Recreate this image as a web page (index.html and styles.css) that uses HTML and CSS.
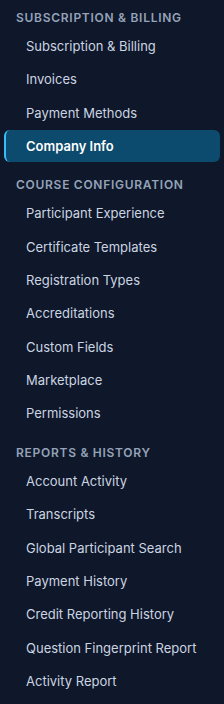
FILE: index.html
```html
<!DOCTYPE html>
<html lang="en">
<head>
<meta charset="utf-8">
<title>Settings navigation</title>
<link rel="stylesheet" href="styles.css">
</head>
<body>
<nav class="sidebar">
  <section class="group">
    <h2 class="group-title">Subscription &amp; Billing</h2>
    <a class="item" href="#">Subscription &amp; Billing</a>
    <a class="item" href="#">Invoices</a>
    <a class="item" href="#">Payment Methods</a>
    <a class="item active" href="#">Company Info</a>
  </section>
  <section class="group">
    <h2 class="group-title">Course Configuration</h2>
    <a class="item" href="#">Participant Experience</a>
    <a class="item" href="#">Certificate Templates</a>
    <a class="item" href="#">Registration Types</a>
    <a class="item" href="#">Accreditations</a>
    <a class="item" href="#">Custom Fields</a>
    <a class="item" href="#">Marketplace</a>
    <a class="item" href="#">Permissions</a>
  </section>
  <section class="group">
    <h2 class="group-title">Reports &amp; History</h2>
    <a class="item" href="#">Account Activity</a>
    <a class="item" href="#">Transcripts</a>
    <a class="item" href="#">Global Participant Search</a>
    <a class="item" href="#">Payment History</a>
    <a class="item" href="#">Credit Reporting History</a>
    <a class="item" href="#">Question Fingerprint Report</a>
    <a class="item" href="#">Activity Report</a>
  </section>
</nav>
</body>
</html>
```

FILE: styles.css
```css
html, body {
  margin: 0;
  padding: 0;
  background: #0f172a;
}
body {
  font-family: Inter, "Noto Sans", sans-serif;
  width: 224px;
  height: 704px;
  overflow: hidden;
}
.sidebar {
  display: flex;
  flex-direction: column;
  padding-top: 10px;
}
.group {
  display: flex;
  flex-direction: column;
  gap: 1.33px;
}
.group + .group {
  margin-top: 15.5px;
}
.group-title {
  margin: 0 0 2.67px 0;
  padding-left: 16px;
  font-size: 12px;
  line-height: 16px;
  font-weight: 600;
  text-transform: uppercase;
  letter-spacing: 0.06em;
  color: #94a3b8;
}
.item {
  display: block;
  margin: 0 4px;
  padding: 6px 8px 6px 22px;
  line-height: 20px;
  font-size: 13px;
  color: #cbd5e1;
  text-decoration: none;
  border-radius: 6px;
  white-space: nowrap;
}
.item.active {
  background: #0c4a6e;
  color: #ffffff;
  font-weight: 600;
  border-left: 2px solid #38bdf8;
  padding-left: 20px;
}
```
